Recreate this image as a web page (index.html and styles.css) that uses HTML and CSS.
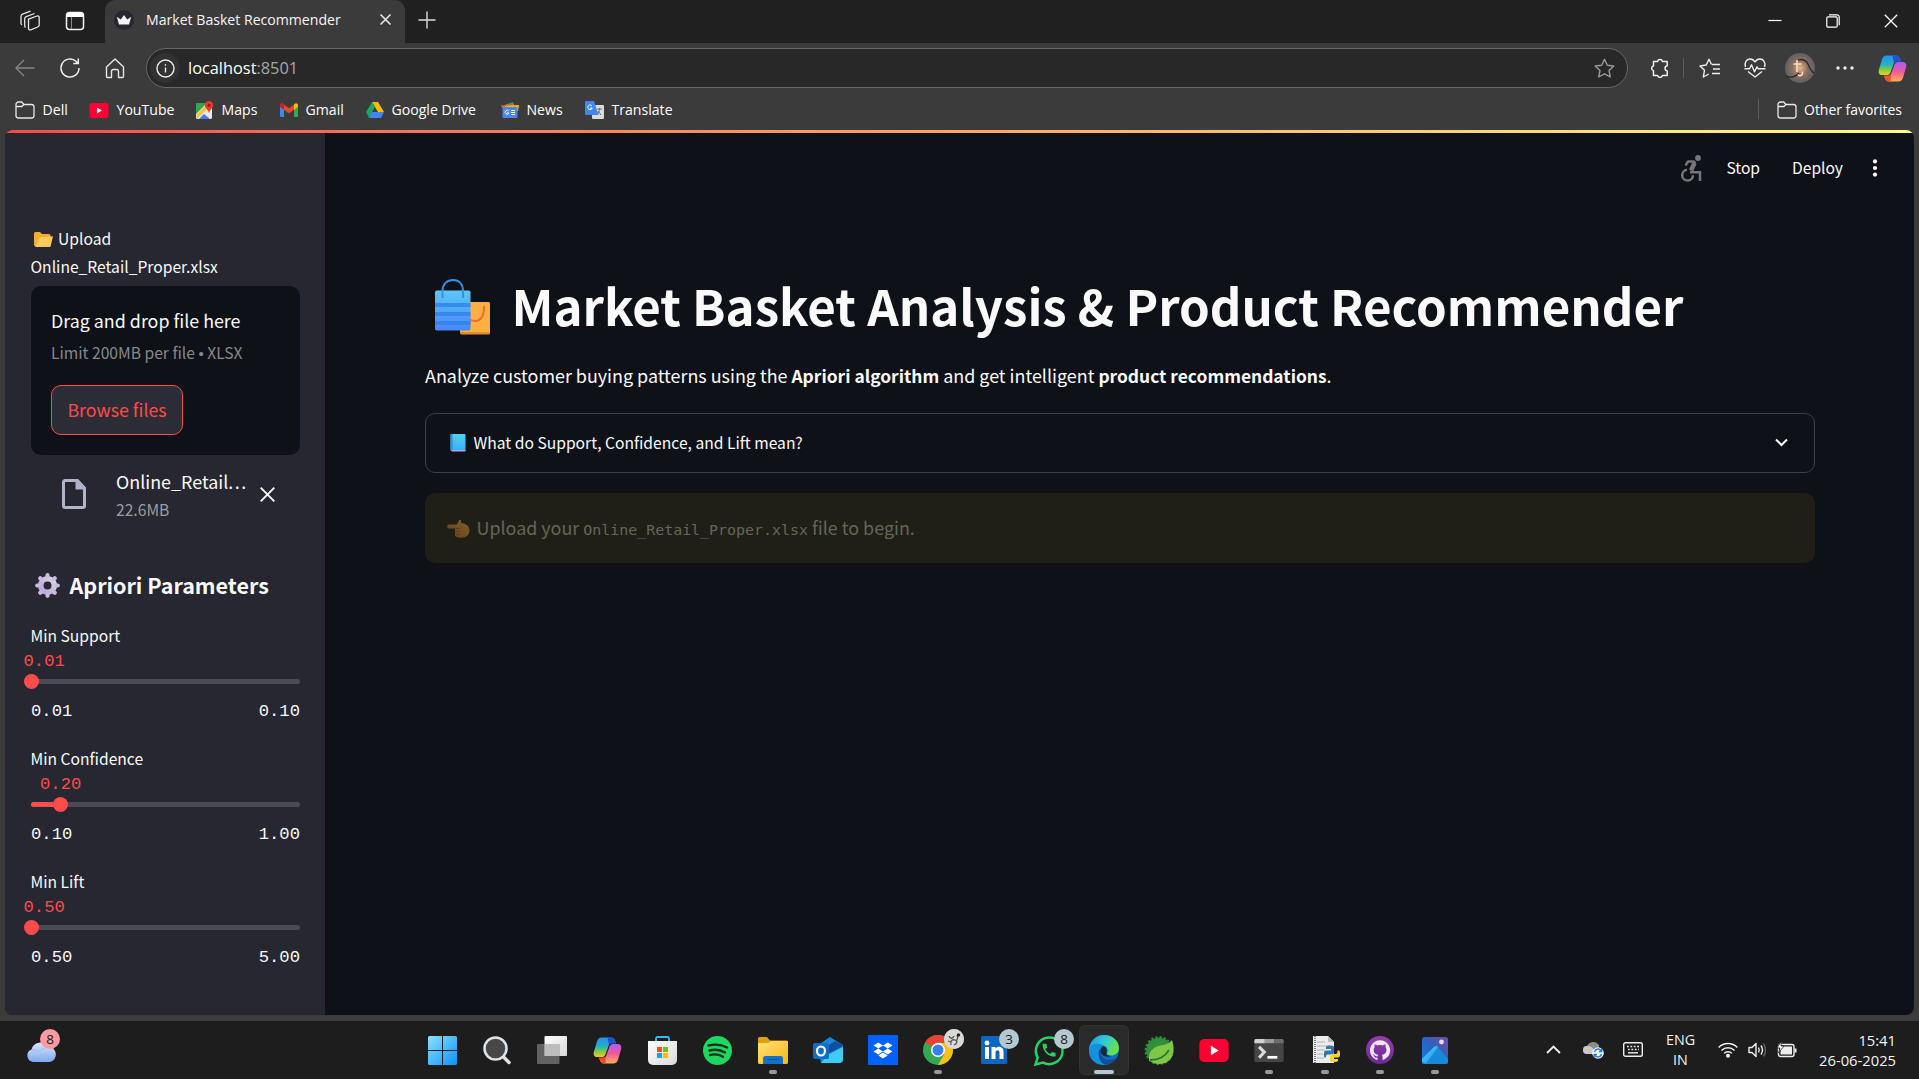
FILE: index.html
```html
<!DOCTYPE html>
<html lang="en">
<head>
<meta charset="utf-8">
<title>Market Basket Recommender</title>
<link rel="stylesheet" href="styles.css">
</head>
<body>
<svg class="defs" width="0" height="0" aria-hidden="true">
  <defs>
    <linearGradient id="cpA" x1="0" y1="0" x2="0" y2="1"><stop offset="0" stop-color="#2d8df5"/><stop offset=".45" stop-color="#1fb5c0"/><stop offset=".75" stop-color="#8bcc3c"/><stop offset="1" stop-color="#fbc91c"/></linearGradient>
    <linearGradient id="cpB" x1="0" y1="0" x2="0" y2="1"><stop offset="0" stop-color="#a95cf5"/><stop offset=".5" stop-color="#ee5a9a"/><stop offset="1" stop-color="#ffb057"/></linearGradient>
    <linearGradient id="win" x1="0" y1="0" x2="1" y2="1"><stop offset="0" stop-color="#8fe0ff"/><stop offset="1" stop-color="#0a93ff"/></linearGradient>
    <linearGradient id="fold" x1="0" y1="0" x2="1" y2="1"><stop offset="0" stop-color="#ffe07a"/><stop offset="1" stop-color="#fcb714"/></linearGradient>
    <linearGradient id="bagA" x1="0" y1="0" x2="0" y2="1"><stop offset="0" stop-color="#5cc8f8"/><stop offset="1" stop-color="#4a86fb"/></linearGradient>
    <linearGradient id="gearG" x1="1" y1="0" x2="0" y2="1"><stop offset="0" stop-color="#d9d4e2"/><stop offset="1" stop-color="#b9a2d8"/></linearGradient>
    <linearGradient id="bookG" x1="0" y1="0" x2="0" y2="1"><stop offset="0" stop-color="#52d0f0"/><stop offset="1" stop-color="#38b0f2"/></linearGradient>
    <linearGradient id="handG" x1="0" y1="1" x2="1" y2="0"><stop offset="0" stop-color="#6d3c24"/><stop offset="1" stop-color="#7b6420"/></linearGradient>
    <linearGradient id="edgeT" x1="0" y1="0" x2="1" y2=".4"><stop offset="0" stop-color="#1c93dc"/><stop offset=".5" stop-color="#30c4e0"/><stop offset="1" stop-color="#63e34e"/></linearGradient>
    <linearGradient id="ghG" x1="0" y1="0" x2="0" y2="1"><stop offset="0" stop-color="#9a3bb0"/><stop offset="1" stop-color="#6a2a96"/></linearGradient>
    <linearGradient id="photo" x1="0" y1="1" x2="1" y2="0"><stop offset="0" stop-color="#1a7fe0"/><stop offset=".5" stop-color="#2b62c0"/><stop offset="1" stop-color="#7a4aa0"/></linearGradient>
    <linearGradient id="cloudG" x1="0" y1="0" x2="0" y2="1"><stop offset="0" stop-color="#dbe7fb"/><stop offset="1" stop-color="#7fa8ee"/></linearGradient>
    <linearGradient id="white" x1="0" y1="0" x2="1" y2="1"><stop offset="0" stop-color="#fff"/><stop offset="1" stop-color="#d8d8d8"/></linearGradient>
    <linearGradient id="mount" x1="0" y1="0" x2="1" y2="1"><stop offset="0" stop-color="#4fdcff"/><stop offset="1" stop-color="#1b8be6"/></linearGradient>
    <radialGradient id="ava"><stop offset="0" stop-color="#f0b48c"/><stop offset=".5" stop-color="#8d6f60"/><stop offset="1" stop-color="#5e6063"/></radialGradient>
    <symbol id="copilot" viewBox="0 0 28 28">
      <path d="M8.500 1.500h9c2 0 3.200 1.100 3.800 3l.8 2.500h-4.200c-1.500 0-2.300.8-2.800 2.300l-2.900 8c-.7 2-1.700 3-3.800 3H4.200c-3 0-4.200-2.200-3.300-5.200l2.900-9.800C4.600 2.800 6 1.500 8.500 1.500z" fill="url(#cpA)"/>
      <path d="M14 1.500h3.500c2 0 3.200 1.100 3.800 3l.8 2.500h-4.200c-1.200 0-2 .5-2.500 1.500z" fill="#1f54cf"/>
      <path d="M19.500 26.500h-9c-2 0-3.200-1.100-3.800-3l-.8-2.500h4.200c1.500 0 2.300-.8 2.800-2.300l2.900-8c.7-2 1.700-3 3.800-3h4.200c3 0 4.200 2.200 3.300 5.200l-2.900 9.800c-.8 2.500-2.200 3.800-4.700 3.800z" fill="url(#cpB)"/>
      <path d="M12 26.500h-1.500c-2 0-3.200-1.100-3.800-3l-.8-2.500h4.200c1.200 0 2-.5 2.500-1.500z" fill="#f0502c"/>
    </symbol>
    <symbol id="folder" viewBox="0 0 20 18"><path d="M1 3.500A2.500 2.500 0 0 1 3.500 1h3.200L9 3.500h7.500A2.500 2.500 0 0 1 19 6v8.500a2.500 2.500 0 0 1-2.500 2.500h-13A2.500 2.500 0 0 1 1 14.500zM1 5.500h5.800L9 3.500" fill="none" stroke="#e8e8e8" stroke-width="1.300"/></symbol>
    <symbol id="ytube" viewBox="0 0 28 22"><rect width="28" height="22" rx="4.500" fill="#ff0033"/><path d="M11 6.500v9l7.500-4.500z" fill="#fff"/></symbol>
  </defs>
</svg>

<header class="tabstrip">
  <svg class="ico-workspaces" width="22" height="22" viewBox="0 0 22 22" fill="none" stroke="#e6e6e6" stroke-width="1.300" stroke-linejoin="round"><path d="M9.500 9.200l8.500-3.200c1.300-.4 2.200.2 2.200 1.500v7.300c0 1-.5 1.800-1.500 2.200l-7 2.800c-1.300.5-2.200-.2-2.200-1.500z"/><path d="M6.500 17.500c-.7-.4-.8-.9-.8-1.700V9c0-1.200.4-1.900 1.500-2.300L15.500 3.500M3 15c-.8-.4-1-.9-1-1.700V6.500c0-1.200.4-1.900 1.500-2.300L11.500 1.200"/></svg>
  <svg width="20" height="20" viewBox="0 0 20 20"><rect x="1.500" y="1.500" width="17" height="17" rx="3" fill="none" stroke="#f2f2f2" stroke-width="1.500"/><path d="M1.500 6V4a2.500 2.500 0 0 1 2.500-2.500h12A2.500 2.500 0 0 1 18.500 4v2z" fill="#fff"/><path d="M6.500 6v12" stroke="#8a8a8a"/></svg>
  <div class="tab">
    <svg width="20" height="20" viewBox="0 0 20 20"><circle cx="10" cy="10" r="10" fill="#262730"/><path d="M2.800 6.800l4 2.800L10 5l3.200 4.600 4-2.800-2.200 7.700H5z" fill="#f4f4f4"/></svg>
    <span class="tab-title">Market Basket Recommender</span>
    <svg width="13" height="13" viewBox="0 0 13 13" stroke="#eee" stroke-width="1.500"><path d="M1.500 1.500l10 10M11.500 1.500l-10 10"/></svg>
  </div>
  <svg class="ico-plus" width="18" height="18" viewBox="0 0 18 18" stroke="#ddd" stroke-width="1.400"><path d="M9 .5v17M.5 9h17"/></svg>
  <div class="winctl">
    <svg width="14" height="14" viewBox="0 0 14 14"><path d="M.5 6.500h13" stroke="#fff" stroke-width="1.200"/></svg>
    <svg width="14" height="14" viewBox="0 0 14 14" fill="none" stroke="#fff" stroke-width="1.200"><rect x=".8" y="2.800" width="10.400" height="10.400" rx="1.200"/><path d="M3 .8h8a2.200 2.200 0 0 1 2.200 2.200v8.200"/></svg>
    <svg width="14" height="14" viewBox="0 0 14 14" stroke="#fff" stroke-width="1.300"><path d="M.8.800l12.400 12.400M13.200.800L.8 13.200"/></svg>
  </div>
</header>

<nav class="toolbar">
  <span class="tool"><svg width="20" height="18" viewBox="0 0 20 18" fill="none" stroke="#858585" stroke-width="1.300"><path d="M19.500 9H1M9 1L1 9l8 8"/></svg></span>
  <span class="tool"><svg width="22" height="22" viewBox="0 0 22 22" fill="none" stroke="#eee" stroke-width="1.500"><path d="M20 11a9 9 0 1 1-2.800-6.500L19 6.300M19.300 1.500v5h-5"/></svg></span>
  <span class="tool"><svg width="20" height="21" viewBox="0 0 20 21" fill="none" stroke="#e6e6e6" stroke-width="1.400" stroke-linejoin="round"><path d="M1.500 9L10 1l8.500 8v9.500a1 1 0 0 1-1 1h-4v-6a2 2 0 0 0-2-2h-3a2 2 0 0 0-2 2v6h-4a1 1 0 0 1-1-1z"/></svg></span>
  <div class="address">
    <span class="info"><svg width="19" height="19" viewBox="0 0 19 19" fill="none" stroke="#eee" stroke-width="1.400"><circle cx="9.500" cy="9.500" r="8.500"/><path d="M9.500 8.500v5M9.500 5.200v1.500"/></svg></span>
    <span class="url">localhost<span class="port">:8501</span></span>
    <svg class="star" width="21" height="21" viewBox="0 0 21 21" fill="none" stroke="#9a9a9a" stroke-width="1.400" stroke-linejoin="round"><path d="M10.500 1.200l2.800 6 6.500.8-4.800 4.500 1.300 6.500-5.800-3.200L4.700 19 6 12.500 1.200 8l6.500-.8z"/></svg>
  </div>
  <span class="tool ext"><svg width="20" height="21" viewBox="0 0 20 21" fill="none" stroke="#eee" stroke-width="1.500" stroke-linejoin="round"><path d="M3.500 3.500h4a2.600 2.600 0 0 1 5 0h4.700v4.200a2.700 2.700 0 0 0 0 5.300v4.500h-4.700a2.600 2.600 0 0 1-5 0h-4v-4.700a2.600 2.600 0 0 1 0-5z"/></svg></span>
  <span class="vrule"></span>
  <span class="tool fav"><svg width="21" height="20" viewBox="0 0 21 20" fill="none" stroke="#eee" stroke-width="1.400" stroke-linejoin="round"><path d="M12.500 6.500L10 1.200 7.200 7 1 8l4.500 4.300L4.300 19l5.500-3M13 6.500h8M14 11h7M13 15.500h8"/></svg></span>
  <span class="tool"><svg width="22" height="20" viewBox="0 0 22 20" fill="none" stroke="#eee" stroke-width="1.400" stroke-linejoin="round"><path d="M1.500 9C0 4 3 1 6 1c2.200 0 4 1.200 5 3 1-1.800 2.800-3 5-3 3 0 6 3 4.500 8M.5 10.800h5l2-4 3 7 2.500-5 1.200 2h7.300M4 13.500l7 5.500 7-5.500"/></svg></span>
  <span class="tool"><svg width="30" height="30" viewBox="0 0 30 30"><circle cx="15" cy="15" r="15" fill="url(#ava)"/><path d="M1 23c6 3 10 0 13-3M13 7c5-1 8 0 10 4 2 5 4 8 6 9" fill="none" stroke="#222" stroke-width="1.200"/><path d="M12 7v12M8.500 11h8M13 21.500c1 2.500 5 1.500 4.500-3" fill="none" stroke="#ffe1b8" stroke-width="1.500"/></svg></span>
  <span class="tool"><svg width="18" height="4" viewBox="0 0 18 4" fill="#eee"><circle cx="2" cy="2" r="1.700"/><circle cx="9" cy="2" r="1.700"/><circle cx="16" cy="2" r="1.700"/></svg></span>
  <span class="tool cop"><svg width="29" height="29"><use href="#copilot"/></svg></span>
</nav>

<nav class="favorites">
  <span><svg width="20" height="18"><use href="#folder"/></svg>Dell</span>
  <span><svg width="20" height="15"><use href="#ytube"/></svg>YouTube</span>
  <span class="maps"><svg width="18" height="19" viewBox="0 0 18 19"><rect y="2" width="16" height="16" rx="1.500" fill="#e8e8e8"/><path d="M0 3.500A1.500 1.500 0 0 1 1.500 2H11L0 13z" fill="#2fa551"/><path d="M0 14l11-11 2 3L1 18z" fill="#f5c63a"/><path d="M3 18l5-5 6 5z" fill="#3f7df0"/><path d="M13 0a4.200 4.200 0 0 1 4.200 4.200c0 3-3.600 4-4.200 8-.6-4-4.200-5-4.200-8A4.200 4.200 0 0 1 13 0z" fill="#e33b2e"/><circle cx="13" cy="4.200" r="1.500" fill="#8c1d14"/></svg>Maps</span>
  <span class="gmail"><svg width="18" height="14" viewBox="0 0 18 14"><path d="M0 2v11a1 1 0 0 0 1 1h3V5z" fill="#4285f4"/><path d="M18 2v11a1 1 0 0 1-1 1h-3V5z" fill="#34a853"/><path d="M0 2.500C0 .5 2 0 3.300 1L9 5.300 14.700 1C16 0 18 .5 18 2.500L17.500 4 9 10.500.5 4z" fill="#ea4335"/><path d="M14 1.500l.7-.5C16 0 18 .5 18 2.500L17.800 4 14 6.700z" fill="#fbbc04"/><path d="M4 1.500L3.300 1C2 0 0 .5 0 2.500L.2 4 4 6.700z" fill="#c5221f"/></svg>Gmail</span>
  <span><svg width="18" height="16" viewBox="0 0 18 16"><path d="M6 0h6l6 10h-6z" fill="#fbbc04"/><path d="M6 0l3 5-6 11-3-6z" fill="#1fa463"/><path d="M3 16l3-6h12l-3 6z" fill="#4285f4"/></svg>Google Drive</span>
  <span><svg width="18" height="16" viewBox="0 0 18 16"><path d="M3 3l9-3 2 6H4z" fill="#2fa551"/><path d="M0 3.500L13 2l1 4H1z" fill="#ea5b4a"/><path d="M4 4l14-1-1 6H4z" fill="#fbbc04"/><rect x="1.500" y="5" width="15" height="11" rx="1" fill="#4a86f0"/><path d="M7.800 9A2 2 0 1 0 8 11H6M10 8.500h4M10 10.500h4M10 12.500h4" fill="none" stroke="#fff"/></svg>News</span>
  <span><svg width="19" height="18" viewBox="0 0 19 18"><rect x="7" y="4" width="12" height="14" rx="1" fill="#dcdcdc"/><path d="M1 0h8l4.500 14H1a1 1 0 0 1-1-1V1a1 1 0 0 1 1-1z" fill="#4285f4"/><path d="M7 5A2.300 2.300 0 1 0 7.300 7H5" fill="none" stroke="#fff"/><path d="M12 8h5M14.500 7v1c0 2-1 4-2 5M13 10l3 4" fill="none" stroke="#5d6f80"/></svg>Translate</span>
  <span class="other"><i class="vrule"></i><svg width="20" height="18"><use href="#folder"/></svg>Other favorites</span>
</nav>

<div class="frame">
  <div class="decoration"></div>
  <div class="app">
    <aside class="sidebar">
      <p class="label upload-label"><svg width="19" height="15" viewBox="0 0 19 15"><path d="M0 1.500A1.500 1.500 0 0 1 1.500 0H6l2 2h7a1.500 1.500 0 0 1 1.500 1.500V14H1.500A1.500 1.500 0 0 1 0 12.500z" fill="#f5a93b"/><path d="M5.500 5.500L19 4.300 16.800 13.500a1.500 1.500 0 0 1-1.500 1.500H1z" fill="#ffc95a"/></svg> Upload<br>Online_Retail_Proper.xlsx</p>
      <section class="dropzone">
        <div class="drop-title">Drag and drop file here</div>
        <div class="drop-limit">Limit 200MB per file <b class="bullet">•</b> XLSX</div>
        <button class="browse">Browse files</button>
      </section>
      <div class="file">
        <svg width="24" height="30" viewBox="0 0 24 30"><path d="M3 1.500h12.500L22.500 9v18a1.500 1.500 0 0 1-1.500 1.500H3A1.500 1.500 0 0 1 1.500 27V3A1.500 1.500 0 0 1 3 1.500z" fill="none" stroke="#b1b3c8" stroke-width="3"/><path d="M13.500 1v9.500h9.500z" fill="#b1b3c8"/></svg>
        <div class="file-info"><div class="file-name">Online_Retail<span class="dots">...</span></div><div class="file-size">22.6MB</div></div>
        <svg width="15" height="15" viewBox="0 0 15 15" stroke="#fafafa" stroke-width="1.900"><path d="M.7.700l13.600 13.600M14.300.700L.7 14.300"/></svg>
      </div>
      <h2 class="params"><svg width="25" height="25" viewBox="-12.500 -12.500 25 25"><circle r="6.800" fill="none" stroke="url(#gearG)" stroke-width="5.600"/><g fill="none" stroke="#c8bcdc" stroke-width="4.200" stroke-linecap="round"><path d="M0-9v-1.300M0 9v1.300M9 0h1.300M-9 0h-1.300M6.400 6.400l.9.900M-6.400-6.400l-.9-.9M6.400-6.400l.9-.9M-6.400 6.400l-.9.900"/></g></svg>Apriori Parameters</h2>
      <div class="slider">
        <div class="label">Min Support</div>
        <div class="value" style="margin-left:-7.500px">0.01</div>
        <div class="rail"><div class="track"></div><i class="thumb" style="left:0%"></i></div>
        <div class="ticks"><span>0.01</span><span>0.10</span></div>
      </div>
      <div class="slider">
        <div class="label">Min Confidence</div>
        <div class="value" style="margin-left:9px">0.20</div>
        <div class="rail"><div class="track"><div class="fill" style="width:11.110%"></div></div><i class="thumb" style="left:11.110%"></i></div>
        <div class="ticks"><span>0.10</span><span>1.00</span></div>
      </div>
      <div class="slider">
        <div class="label">Min Lift</div>
        <div class="value" style="margin-left:-7.500px">0.50</div>
        <div class="rail"><div class="track"></div><i class="thumb" style="left:0%"></i></div>
        <div class="ticks"><span>0.50</span><span>5.00</span></div>
      </div>
    </aside>
    <main class="main">
      <div class="app-header">
        <svg width="22" height="27" viewBox="0 0 22 27" fill="none" stroke="#757679" stroke-width="2.500"><circle cx="18" cy="3" r="2.900" fill="#757679" stroke="none"/><path d="M5.500 10.500L8 6.500h5.500l2 2" stroke-linejoin="round"/><path d="M14.500 8l-3.500 7.500" stroke-width="4.500"/><path d="M10 17.300h10V26"/><path d="M7 14.800a5.400 5.400 0 1 0 6 5.400"/></svg>
        <span class="stop">Stop</span><span class="deploy">Deploy</span>
        <svg width="6" height="18" viewBox="0 0 6 18" fill="#fafafa"><circle cx="3" cy="2.400" r="2.100"/><circle cx="3" cy="9" r="2.100"/><circle cx="3" cy="15.600" r="2.100"/></svg>
      </div>
      <h1 class="title"><svg width="55" height="56" viewBox="0 0 55 56"><rect x="25" y="23" width="30" height="32" rx="1.500" fill="#ffb040"/><path d="M25 53h30v1a1.500 1.500 0 0 1-1.500 1.500H26z" fill="#e58a2e"/><path d="M49 27c0 9-3 15-9 15s-8-4-8-10" fill="none" stroke="#ee6c38" stroke-width="2"/><rect y="11.500" width="35.500" height="40" rx="1.800" fill="url(#bagA)"/><g fill="#2f82e8"><path d="M0 24h35.500v4H0zM0 33h35.500v4H0zM0 42h35.500v4H0z" opacity=".8"/></g><path d="M7.500 19V12C7.500 5 12 1 18 1s10 4 10 11v7" fill="none" stroke="#3390e2" stroke-width="2"/></svg><span>Market Basket Analysis &amp; Product Recommender</span></h1>
      <p class="lead">Analyze customer buying patterns using the <strong>Apriori algorithm</strong> and get intelligent <strong>product recommendations</strong>.</p>
      <div class="expander"><svg width="16" height="18" viewBox="0 0 16 18"><rect x=".500" y="0" width="15" height="17" rx="1" fill="url(#bookG)"/><path d="M.5 0h2v16h-2z" fill="#2a8fd8"/><path d="M1 16h14.500v1.500H2z" fill="#a9a8ee"/></svg><span>What do Support, Confidence, and Lift mean?</span>
        <svg class="chev" width="13" height="9" viewBox="0 0 13 9" fill="none" stroke="#fafafa" stroke-width="2"><path d="M1 1.500l5.500 5.500L12 1.500"/></svg></div>
      <div class="alert"><svg width="22" height="19" viewBox="0 0 22 19"><path d="M1.200 5.500h7.500L11 1.500C12 0 13.500.500 13.200 2.500L13 4c5 .5 8.500 3 8.500 7.500 0 4.500-3.500 7.200-8 7.200-4 0-6.500-1-6.500-2.500V9.500H1.200a2 2 0 0 1 0-4z" fill="url(#handG)"/><path d="M7 9.500h5M7.500 12.500h4.500M8 15.500h4" stroke="#5a351f" stroke-width=".8"/></svg><span>Upload your <code>Online_Retail_Proper.xlsx</code> file to begin.</span></div>
    </main>
  </div>
</div>

<footer class="taskbar">
  <div class="weather"><svg width="31" height="22" viewBox="0 0 31 22"><circle cx="22" cy="6" r="6" fill="#f58a1f"/><path d="M7 21a6.500 6.500 0 0 1-1.500-12.500A9 9 0 0 1 22 6a7.600 7.600 0 0 1 2 15z" fill="url(#cloudG)"/><path d="M6 9c3-.8 6 0 7.500 2C16 7 21 5.500 24 7" fill="none" stroke="#9dbcf2"/></svg><b class="badge pink">8</b></div>
  <div class="apps">
    <span><svg width="29" height="29" viewBox="0 0 29 29" fill="url(#win)"><path d="M0 1.500A1.500 1.500 0 0 1 1.500 0H14v14H0zM15 0h12.500A1.500 1.500 0 0 1 29 1.500V14H15zM0 15h14v14H1.500A1.500 1.500 0 0 1 0 27.500zM15 15h14v12.500a1.500 1.500 0 0 1-1.500 1.500H15z"/></svg></span>
    <span><svg width="28" height="29" viewBox="0 0 28 29" stroke="#dfe3e6"><path d="M18.500 19l7.500 7.500" stroke-width="3.500" stroke-linecap="round"/><circle cx="12.500" cy="12.500" r="11" fill="#474747" stroke-width="2.500"/></svg></span>
    <span><svg width="30" height="28" viewBox="0 0 30 28"><rect x="7.500" width="22.500" height="20" rx="1" fill="url(#white)"/><rect y="8" width="22.500" height="20" rx="1" fill="#7a7a7a" fill-opacity=".75"/><path d="M7.500 8h15v12h-15z" fill="#bdbdbd"/></svg></span>
    <span><svg width="29" height="29"><use href="#copilot"/></svg></span>
    <span><svg width="29" height="29" viewBox="0 0 29 29"><path d="M8 6V2.500A1.500 1.500 0 0 1 9.500 1h10A1.500 1.500 0 0 1 21 2.500V6" fill="none" stroke="#2ec0ee" stroke-width="1.800"/><path d="M0 5h29v19a5 5 0 0 1-5 5H5a5 5 0 0 1-5-5z" fill="url(#white)"/><path d="M9 11h5v5H9z" fill="#f25022"/><path d="M15 11h5v5h-5z" fill="#7fba00"/><path d="M9 17h5v5H9z" fill="#00a4ef"/><path d="M15 17h5v5h-5z" fill="#ffb900"/></svg></span>
    <span><svg width="29" height="29" viewBox="0 0 29 29"><circle cx="14.500" cy="14.500" r="14.500" fill="#1ed760"/><path d="M5.500 9.500c6-1.500 13-1 18.500 2M6.500 14.500c5-1.300 11-.7 15.500 2M7 19c4-1 9-.6 13 1.700" fill="none" stroke="#16301c" stroke-width="2.400" stroke-linecap="round"/></svg></span>
    <span><svg width="30" height="27" viewBox="0 0 30 27"><path d="M0 1.500A1.500 1.500 0 0 1 1.500 0H9l3 3.500h16.500A1.500 1.500 0 0 1 30 5v5H0z" fill="#dfa00c"/><path d="M0 6h10l3-2h17v21.500a1.500 1.500 0 0 1-1.500 1.500h-27A1.500 1.500 0 0 1 0 25.500z" fill="url(#fold)"/><path d="M5 27v-5.500A2.500 2.500 0 0 1 7.500 19h15a2.500 2.500 0 0 1 2.500 2.500V27z" fill="#1173c5"/><path d="M9 22.500h12" stroke="#0a4f94"/></svg><i class="run"></i></span>
    <span><svg width="30" height="27" viewBox="0 0 30 27"><path d="M5 8L17 0l13 8v14a4 4 0 0 1-4 4H8z" fill="#1a86d8"/><path d="M30 10v12a4 4 0 0 1-4 4H8l8-9z" fill="#3ccdf2"/><path d="M15 17L30 9v-1L22 4 10 12z" fill="#0f4fa0"/><rect y="6" width="16" height="16" rx="2" fill="#0f6cc9"/><ellipse cx="8" cy="14" rx="4" ry="4.500" fill="none" stroke="#fff" stroke-width="2.200"/></svg></span>
    <span><svg width="30" height="30" viewBox="0 0 30 30"><rect width="30" height="30" fill="#0061fe"/><g transform="translate(5.500 6) scale(.79)" fill="#fff"><path d="M6 1.807L0 5.629l6 3.822 6.001-3.822zM18 1.807l-6 3.822 6 3.822 6-3.822zM0 13.274l6 3.822 6.001-3.822L6 9.452zM18 9.452l-6 3.822 6 3.822 6-3.822zM6 18.371l6.001 3.822 6-3.822-6-3.822z"/></g></svg></span>
    <span><svg width="30" height="30" viewBox="0 0 30 30"><circle cx="15" cy="15" r="15" fill="#34a853"/><path d="M15 15L2 7.500A15 15 0 0 1 28 7.500H15z" fill="#ea4335"/><path d="M15 8h13.200A15 15 0 0 1 15 30l6.500-11z" fill="#fbc116"/><circle cx="15" cy="15" r="7" fill="#fff"/><circle cx="15" cy="15" r="5.500" fill="#3a7df0"/></svg><b class="badge pic"><svg width="20" height="20" viewBox="0 0 20 20"><circle cx="10" cy="10" r="10" fill="#d9dad5"/><path d="M5 7c1 3 4 3 5 0M7 16c-1-4 1-6 4-5s2 4-1 5M12 12c2-2 2-4 1-6M4 12l3 1" stroke="#55564f" stroke-width="1.300" fill="none"/><circle cx="14.500" cy="6" r="1.700" fill="#222"/></svg></b><i class="run"></i></span>
    <span><svg width="26" height="28" viewBox="0 0 26 28"><rect width="26" height="28" rx="1.500" fill="#0a66c2"/><circle cx="6" cy="7" r="2.400" fill="#fff"/><path d="M4 11h4v12H4zM10.500 11h4v1.700c2-3 8-2.700 8 3V23h-4v-6.500c0-3-4-3-4 0V23h-4z" fill="#fff"/></svg><b class="badge">3</b></span>
    <span><svg width="30" height="31" viewBox="0 0 30 31"><path d="M1.500 29.500l2.200-7A13.300 13.300 0 1 1 9 27.600z" fill="none" stroke="#25d366" stroke-width="2.500"/><path transform="translate(6.500 6.500) scale(.72)" fill="#25d366" d="M6.620 10.790c1.440 2.830 3.760 5.140 6.590 6.590l2.200-2.200c.27-.27.67-.36 1.020-.24 1.120.37 2.330.57 3.570.57.55 0 1 .45 1 1V20c0 .55-.45 1-1 1-9.390 0-17-7.610-17-17 0-.55.45-1 1-1h3.500c.55 0 1 .45 1 1 0 1.250.2 2.450.57 3.570.11.35.03.74-.25 1.020z"/></svg><b class="badge">8</b></span>
    <span class="active"><svg width="30" height="30" viewBox="0 0 30 30"><circle cx="15" cy="15" r="15" fill="#0c6fc4"/><path d="M0 14C1 6 7 0 15 0c9 0 15 6 15 13 0 5-4 7.500-8 7.500-3 0-4.500-1.500-4-2.500 1.500-2 1-7-4.500-7.500C7.500 10 1 12 0 14z" fill="url(#edgeT)"/><path d="M0 14c1-4 6-6 11-5 3 .6 4 2 4 2-4 1-6 5-5 9s5 8 10 9C8 33-1 24 0 14z" fill="#1590e0"/><path d="M11 14c-1 6 3 11 9 11 3.500 0 6-1 7.500-2-2 4-6 6.500-10 7C10 29 8 18 11 14z" fill="#124d96"/><path d="M14 11c3 1 4.500 4 3.500 7-.5 2 1.500 3 5 3-6 2-11-1-11-5 0-2 1-4 2.500-5z" fill="#15293f"/></svg><i class="run"></i></span>
    <span><svg width="30" height="30" viewBox="0 0 30 30"><circle cx="15" cy="15.500" r="12.800" fill="#2f8f3a"/><circle cx="15" cy="15.500" r="13.200" fill="none" stroke="#2f8f3a" stroke-width="2.500" stroke-dasharray="2.300 1.850"/><path d="M5 25C4 14 12 11 19 10c4-.6 7-2.500 9-5 3 9 2 18-5 22-6 3.500-14 2-18-2z" fill="#7fc744"/><path d="M6 25c8 0 15-3 19-10" fill="none" stroke="#237a33" stroke-width="1.800"/></svg></span>
    <span><svg width="30" height="23"><use href="#ytube"/></svg></span>
    <span><svg width="30" height="23" viewBox="0 0 28 22"><rect width="28" height="22" rx="1.500" fill="#464646"/><path d="M0 4V1.500A1.500 1.500 0 0 1 1.500 0H10v4z" fill="#d0d0d0"/><path d="M10 0h9v4h-9z" fill="#9b9b9b"/><path d="M19 0h7.500A1.500 1.500 0 0 1 28 1.500V4h-9z" fill="#6c6c6c"/><path d="M4.500 7.500l5 5-5 5.500" fill="none" stroke="#d9d9d9" stroke-width="3"/><path d="M12.500 17.500h9.500" stroke="#fff" stroke-width="2.600"/></svg><i class="run"></i></span>
    <span><svg width="26" height="30" viewBox="0 0 26 30"><path d="M1 1h15l6 6v21H1z" fill="#ececec"/><path d="M16 1v6h6z" fill="#bbb"/><path d="M3 1v28" stroke="#555" stroke-width="1.500" stroke-dasharray="1 1"/><path d="M5 7h8M5 11h12M5 15h8M5 19h6M5 23h7" stroke="#c4c4c4" stroke-width="1.500"/><path d="M12 18c0-2 1-2.500 3-2.500h4V14h-5v-2c0-2 8-2 8 0v5c0 2-1 2.500-3 2.500h-3c-2 0-2 1.500-2 3h-1c-1 0-1.500-2-1-4.500z" fill="#3674a8"/><path d="M28 20c0 2-1 2.500-3 2.500h-4V24h5v1.500c0 2-8 2-8 0V21c0-1.500 1-2 3-2h2.500c2 0 2-1.500 2-3.500h1.200c1 0 1.500 2 1.300 4.500z" fill="#ffd23e"/></svg><i class="run"></i></span>
    <span><svg width="28" height="28" viewBox="0 0 28 28"><circle cx="14" cy="14" r="14" fill="url(#ghG)"/><path transform="translate(4 4) scale(.84)" fill="#f0e8f4" d="M12 .297c-6.630 0-12 5.373-12 12 0 5.303 3.438 9.800 8.205 11.385.6.113.82-.258.82-.577 0-.285-.01-1.040-.015-2.040-3.338.724-4.042-1.610-4.042-1.610C4.422 18.070 3.633 17.700 3.633 17.700c-1.087-.744.084-.729.084-.729 1.205.084 1.838 1.236 1.838 1.236 1.070 1.835 2.809 1.305 3.495.998.108-.776.417-1.305.76-1.605-2.665-.3-5.466-1.332-5.466-5.930 0-1.310.465-2.380 1.235-3.220-.135-.303-.54-1.523.105-3.176 0 0 1.005-.322 3.300 1.230.96-.267 1.980-.399 3-.405 1.020.006 2.040.138 3 .405 2.280-1.552 3.285-1.230 3.285-1.230.645 1.653.24 2.873.12 3.176.765.84 1.230 1.910 1.230 3.220 0 4.610-2.805 5.625-5.475 5.920.42.36.81 1.096.81 2.220 0 1.606-.015 2.896-.015 3.286 0 .315.21.69.825.57C20.565 22.092 24 17.592 24 12.297c0-6.627-5.373-12-12-12"/></svg><i class="run"></i></span>
    <span><svg width="26" height="27" viewBox="0 0 26 27"><rect width="26" height="27" rx="2.500" fill="url(#photo)"/><path d="M0 22L12 10c1.500-1.300 3-1.300 4 0l10 12v2.500a2.500 2.500 0 0 1-2.500 2.500h-21A2.500 2.500 0 0 1 0 24.500z" fill="#1789dc"/><path d="M0 22L12 10c1.500-1.300 3-1.300 4 0L4 26.500 0 25z" fill="url(#mount)"/><circle cx="19.500" cy="5" r="2.400" fill="#e3dcf3"/></svg><i class="run"></i></span>
  </div>
  <div class="tray">
    <svg class="t-up" width="15" height="9" viewBox="0 0 15 9" fill="none" stroke="#eee" stroke-width="1.900"><path d="M1 8l6.500-6.500L14 8"/></svg>
    <svg class="t-cloud" width="21" height="18" viewBox="0 0 21 18"><path d="M4 13a4 4 0 0 1 0-8A7 7 0 0 1 16 4v9z" fill="#8d8d8d"/><path d="M4 13a4 4 0 0 1 0-8c3-.5 5 1 7 4l4 4z" fill="#c9c9c9"/><circle cx="15" cy="12" r="5.800" fill="#f5f9fc"/><path d="M11.500 11a3.700 3.700 0 0 1 7-.8M18.500 13a3.700 3.700 0 0 1-7 .8M18.800 7.700v2.800H16M11.200 16.300v-2.800H14" fill="none" stroke="#1b7fd0" stroke-width="1.300"/></svg>
    <svg class="t-kb" width="20" height="15" viewBox="0 0 20 15"><rect x=".700" y=".700" width="18.600" height="13.600" rx="1.800" fill="none" stroke="#eee" stroke-width="1.400"/><path d="M4 4.500h12M5 7.500h11" stroke="#eee" stroke-width="1.600" stroke-dasharray="1.800 1.600"/><path d="M5 10.800h10" stroke="#eee" stroke-width="1.400"/></svg>
    <div class="lang"><span>ENG</span><span>IN</span></div>
    <svg class="t-wifi" width="20" height="16" viewBox="0 0 20 16" fill="none" stroke="#eee" stroke-width="1.500"><path d="M.7 5.500a13 13 0 0 1 18.600 0M3.500 8.500a9.200 9.200 0 0 1 13 0M6.200 11.300a5.400 5.400 0 0 1 7.600 0"/><circle cx="10" cy="13.800" r="1.300" fill="#eee"/></svg>
    <svg class="t-spk" width="19" height="16" viewBox="0 0 19 16" fill="none" stroke="#eee" stroke-width="1.400" stroke-linejoin="round"><path d="M1 5.500h3L8 1.500v13l-4-4H1z"/><path d="M10.500 5.500q1.500 2.500 0 5M13 3.500q3 4.500 0 9"/><path d="M15.500 1.500q4 6.500 0 13" stroke="#666"/></svg>
    <svg class="t-bat" width="20" height="17" viewBox="0 0 20 17"><rect x="1.500" y="3.500" width="15.500" height="12" rx="2" fill="none" stroke="#eee" stroke-width="1.400"/><path d="M3.500 5.500h11.500v8H3.500z" fill="#eee"/><path d="M17.500 7.500h2v4h-2z" fill="#eee"/><path d="M4.500 0L0 7h3l-1.500 5L7 5H4z" fill="#fff" stroke="#1d1d1d" stroke-width=".8"/></svg>
    <div class="clock"><span>15:41</span><span>26-06-2025</span></div>
  </div>
</footer>
</body>
</html>
```
FILE: styles.css
```css
* { box-sizing: border-box; }
body {
  margin: 0;
  height: 1079px;
  display: flex;
  flex-direction: column;
  overflow: hidden;
  background: #3b3b3b;
  color: #fff;
  font-family: "Open Sans", "Noto Sans", sans-serif;
  font-size: 14.1px;
}
svg { display: block; flex: none; overflow: visible; }
.defs { position: absolute; }

/* browser chrome */
.tabstrip { height: 43px; flex: none; display: flex; align-items: center; background: #202020; padding: 0 0 2px 19px; }
.ico-workspaces { margin-right: 24px; }
.tab {
  width: 300px; height: 43px; margin: 2px 0 0 20px; padding: 0 13px 4px 9px;
  display: flex; align-items: center;
  background: #3b3b3b; border-radius: 10px 10px 0 0;
}
.tab-title { flex: 1; margin-left: 12px; font-size: 14.1px; color: #f5f5f5; white-space: nowrap; }
.ico-plus { margin: -2px 0 0 13px; }
.winctl { margin-left: auto; display: flex; gap: 44px; padding-right: 21px; }

.toolbar { height: 50px; flex: none; display: flex; align-items: center; padding-left: 2px; }
.tool { width: 45px; flex: none; display: flex; justify-content: center; }
.address {
  width: 1482px; height: 40px; margin-left: 9px; padding: 0 12px 0 3px;
  display: flex; align-items: center;
  background: #282828; border: 1px solid #686868; border-radius: 20px;
}
.info { width: 30px; height: 30px; border-radius: 50%; background: #323232; display: flex; align-items: center; justify-content: center; }
.url { margin-left: 8px; flex: 1; font-size: 16.35px; }
.port { color: #a6a6a6; }
.ext { margin-left: 9px; }
.vrule { width: 1px; height: 20px; background: #5c5c5c; margin: 0 1px; }
.fav { margin-left: 2px; }
.cop { margin-left: 3px; }

.favorites {
  height: 37px; flex: none; padding: 0 17px 5px 15px;
  display: grid; align-items: center;
  grid-template-columns: 74px 107px 84px 86px 135px 84px 1fr auto;
}
.favorites > span { display: flex; align-items: center; gap: 7.5px; white-space: nowrap; }
.favorites svg { position: relative; top: 1px; }
.favorites .other { font-size: 13.95px; }
.favorites .other .vrule { margin-right: 10px; }

/* page */
.frame {
  height: 885px; flex: none; margin: 0 5px 6px;
  border-radius: 8px; overflow: hidden; background: #0e1117;
  display: flex; flex-direction: column;
  color: #fafafa;
  font-family: "Noto Sans CJK SC", sans-serif;
}
.decoration { height: 3px; flex: none; background: linear-gradient(90deg, #ff4b4b, #fffd80); }
.app { flex: 1; display: flex; }
.sidebar { width: 320px; background: #262730; padding: 92px 25px 0 26px; }
.label { margin: 0 0 0 -0.5px; font-size: 15.65px; line-height: 28px; white-space: nowrap; }
.upload-label svg { display: inline-block; margin: 0 2px 0 3px; vertical-align: -2px; }
.dropzone { margin-top: 5px; height: 169px; padding: 19px 20px 20px; border-radius: 10px; background: #0e1117; }
.drop-title { font-size: 17.85px; line-height: 30px; }
.drop-limit { margin-top: 4px; font-size: 15.65px; line-height: 27px; color: #87888b; white-space: nowrap; }
.bullet { font: 15px "Liberation Sans", sans-serif; }
.browse {
  display: block; margin-top: 19px; width: 132px; height: 50px; padding: 0 0 3px;
  border: 1px solid #ff4b4b; border-radius: 10px; background: #2b2c36;
  color: #ff4b4b; font: 17.75px "Noto Sans CJK SC", sans-serif;
}
.file { height: 66px; margin-top: 6px; padding: 0 25px 0 31px; display: flex; align-items: center; }
.file-info { flex: 1; margin: 2px 0 0 30px; }
.file-name { font-size: 17.9px; line-height: 29px; white-space: nowrap; width: 140px; }
.dots { letter-spacing: 1.500px; }
.file-size { font-size: 15.65px; line-height: 27px; color: #9b9ca1; }
.params { margin: 43px 0 0; height: 30px; padding-left: 4px; display: flex; align-items: center; gap: 9.5px; font-size: 21.5px; line-height: 30px; font-weight: 700; white-space: nowrap; }
.slider { height: 123px; }
.params + .slider { margin-top: 22px; }
.value, .ticks { font: 17.2px/21px "Liberation Mono", monospace; }
.value { color: #ff4b4b; position: relative; top: 1px; }
.rail { position: relative; height: 21px; display: flex; align-items: center; }
.track { width: 100%; height: 5px; border-radius: 3px; background: #4a4b55; }
.fill { height: 5px; border-radius: 3px 0 0 3px; background: #ff4b4b; }
.thumb { position: absolute; top: 3px; width: 15px; height: 15px; margin-left: -7.5px; border-radius: 50%; background: #ff4b4b; }
.ticks { margin-top: 9px; display: flex; justify-content: space-between; }

.main { flex: 1; padding-right: 99px; }
.app-header { height: 72px; margin-right: -63px; padding-bottom: 2px; display: flex; align-items: center; justify-content: flex-end; font-size: 15.6px; }
.app-header span { position: relative; top: -1px; }
.stop { margin-left: 24px; }
.deploy { margin: 0 29px 0 32px; }
.title { margin: 67px 0 0 110px; height: 66px; display: flex; align-items: center; gap: 21.5px; font-size: 49.2px; line-height: 66px; font-weight: 700; white-space: nowrap; }
.title svg { margin-top: 3px; }
.lead, .expander, .alert { margin: 0 0 0 100px; }
.lead { margin-top: 22px; font-size: 17.92px; line-height: 30px; }
.lead strong { font-size: 17.4px; }
.expander { margin-top: 22px; height: 60px; padding: 0 26px 0 24px; display: flex; align-items: center; gap: 7.5px; border: 1px solid #3e4044; border-radius: 10px; font-size: 15.65px; }
.expander span { margin-top: -1px; }
.chev { margin: -2px 0 0 auto; }
.alert { margin-top: 20px; height: 70px; padding: 0 22px; display: flex; align-items: center; gap: 6.5px; border-radius: 10px; background: #1f1f18; color: #666656; font-size: 17.9px; }
.alert > svg { margin-left: 1px; }
.alert > span { margin-top: -3px; }
.alert code { font: 14.95px "DejaVu Sans Mono", monospace; }

/* taskbar */
.taskbar { height: 58px; flex: none; background: #1d1d1d; display: grid; grid-template-columns: 414.5px 1048px 1fr; }
.weather { position: relative; padding: 20px 0 0 26px; }
.badge { position: absolute; display: flex; align-items: center; justify-content: center; width: 20px; height: 20px; left: 33px; top: 8px; border-radius: 50%; background: #b4c8d2; color: #1a1a1a; font-size: 13.5px; font-weight: 400; }
.pink { left: 40px; top: 8px; background: #ff99a4; }
.apps { display: grid; grid-template-columns: repeat(19, 1fr); }
.apps > span { position: relative; display: flex; align-items: center; justify-content: center; }
.apps .active { margin: 4px 2.5px; background: #2a2a2a; border: 1px solid #333; border-radius: 6px; }
.run { position: absolute; left: 50%; bottom: 5px; width: 8px; height: 4px; margin-left: -4px; border-radius: 2px; background: #999; }
.active .run { bottom: 0; width: 20px; margin-left: -10px; background: #b4c8d2; }
.tray { display: flex; align-items: center; font-size: 14.75px; line-height: 20px; color: #f2f2f2; padding: 0 23px 1px 0; }
.lang, .clock { display: flex; flex-direction: column; }
.t-up { margin-left: 83px; }
.t-cloud { margin-left: 22px; }
.t-kb { margin-left: 19px; }
.lang { align-items: center; margin-left: 24px; width: 28px; font-size: 14.3px; }
.t-wifi { margin-left: 23px; }
.t-spk { margin-left: 10px; }
.t-bat { margin-left: 10px; }
.clock { margin-left: auto; text-align: right; }
```
